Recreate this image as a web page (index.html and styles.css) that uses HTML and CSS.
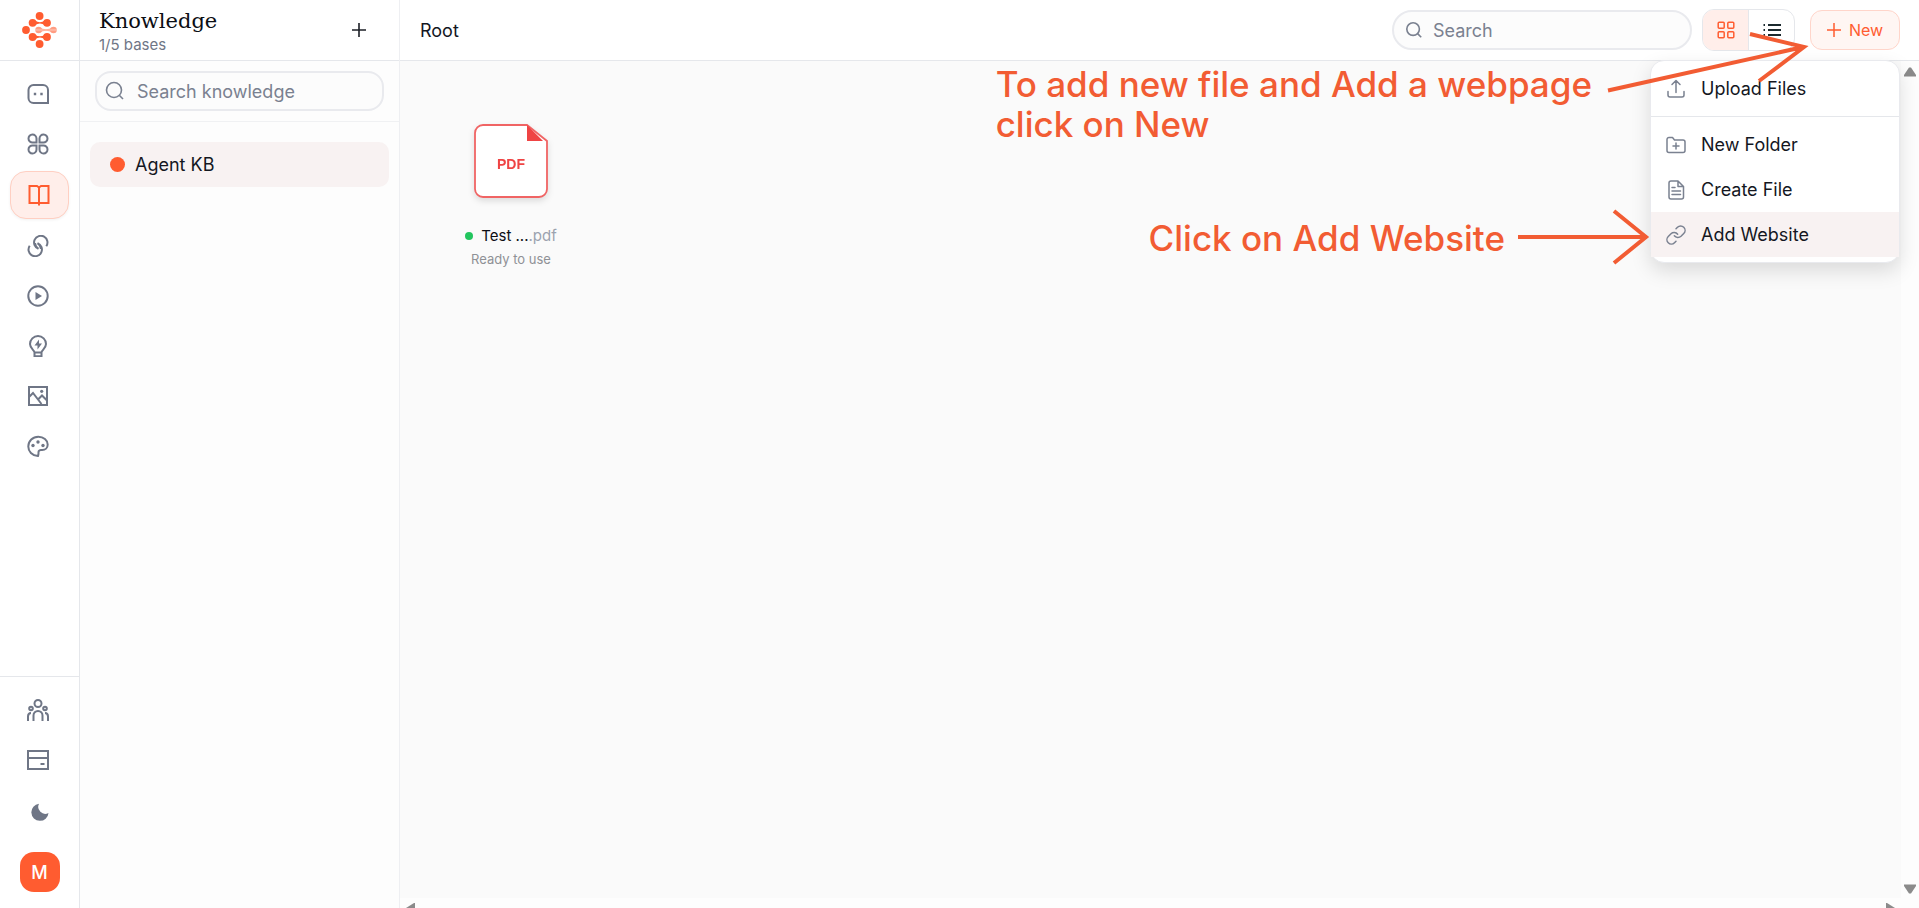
FILE: index.html
```html
<!DOCTYPE html>
<html lang="en">
<head>
    <meta charset="UTF-8">
    <meta name="viewport" content="width=device-width, initial-scale=1.0">
    <title>Knowledge</title>
    <link rel="stylesheet" href="styles.css">
</head>
<body>
    <div class="container">
        <aside class="rail">
            <a href="#" class="logo" aria-label="Home">
                <svg width="36" height="38" viewBox="0 0 36 38">
                    <g fill="#ff5c30">
                        <circle cx="17.6" cy="4" r="3.9"/>
                        <circle cx="10.6" cy="10.8" r="3.9"/>
                        <circle cx="25" cy="10.8" r="3.9"/>
                        <circle cx="4" cy="18" r="3.9"/>
                        <circle cx="10.6" cy="25" r="3.9"/>
                        <circle cx="25" cy="25" r="3.9"/>
                        <circle cx="17.6" cy="32" r="3.9"/>
                        <path d="M13 8.500Q17.800 12 23 8.500V13Q17.800 9.800 13 13ZM13 22.700Q17.800 26 23 22.700V27.200Q17.800 24 13 27.200Z"/>
                    </g>
                    <g fill="#ff9d83">
                        <circle cx="16.600" cy="18" r="3.300"/>
                        <circle cx="31.500" cy="18" r="3.300"/>
                        <path d="M17 15.500Q24 19 31 15.500V20.500Q24 17 17 20.500Z"/>
                    </g>
                    <path d="M13 18h22" stroke="#ffcabc" stroke-width="1"/>
                </svg>
            </a>
            <nav class="rail-nav">
                <a href="#" class="rail-item" aria-label="Chat">
                    <svg class="icon" viewBox="0 0 22 22"><path d="M21 20H6.500a5 5 0 0 1-5-5V7a5 5 0 0 1 5-5H16a5 5 0 0 1 5 5z"/><path d="M8 9.700v2.600M14.500 9.700v2.600" stroke-width="2.400"/></svg>
                </a>
                <a href="#" class="rail-item" aria-label="Apps">
                    <svg class="icon" viewBox="0 0 22 22"><path d="M9.500 9.500H5.700a4 4 0 1 1 3.800-4zM12.500 9.500h3.800a4 4 0 1 0-3.800-4zM9.500 12.500H5.700a4 4 0 1 0 3.800 4zM12.500 12.500h3.800a4 4 0 1 1-3.800 4z"/></svg>
                </a>
                <a href="#" class="rail-item active" aria-label="Knowledge">
                    <svg class="icon" viewBox="0 0 22 22"><path d="M1.500 2H9l2 1.500L13 2h7.500v17h-19zM11 3v18.500"/></svg>
                </a>
                <a href="#" class="rail-item" aria-label="Links">
                    <svg class="icon" viewBox="0 0 22 22"><path d="M11.500 13.800a6.700 6.700 0 1 1 7.800-2.500M10.500 8.200a6.700 6.700 0 1 1-7.800 2.500M8 8c.3 2.500 1.500 4.500 3.500 5.800M14 14c-.3-2.500-1.500-4.500-3.500-5.800"/></svg>
                </a>
                <a href="#" class="rail-item" aria-label="Run">
                    <svg class="icon" viewBox="0 0 22 22"><circle cx="11" cy="11" r="9.700"/><path class="solid" d="M8.500 7v8l6.500-4z"/></svg>
                </a>
                <a href="#" class="rail-item" aria-label="Ideas">
                    <svg class="icon" viewBox="0 0 22 22"><path d="M7.500 17.500v3.700h7v-3.700zM7.500 17.500c0-2-4.500-4-4.500-8.500a8 8 0 0 1 16 0c0 4.500-4.500 6.500-4.500 8.500"/><path class="solid" d="M12 4.500l-4.500 6h3V14.500l4.500-6h-3z"/></svg>
                </a>
                <a href="#" class="rail-item" aria-label="Images">
                    <svg class="icon" viewBox="0 0 22 22"><path d="M2 2h18v18H2zM2 12l4-4 8.500 11M11 14.500l4-4 5 5"/><circle class="solid" cx="14.700" cy="6.300" r="1.600"/></svg>
                </a>
                <a href="#" class="rail-item" aria-label="Themes">
                    <svg class="icon" viewBox="0 0 22 22"><path d="M11 21c-6-.5-9.700-4.500-9.700-9.500 0-5.500 4.500-9.800 10-9.800 5.200 0 9.400 3.500 9.400 7.800 0 3.500-2.500 5.500-5.500 5.500-1.600 0-2.600-.5-3.400 1-.8 1.700.2 3-.8 5z"/><circle class="solid" cx="6" cy="10.500" r="1.700"/><circle class="solid" cx="11" cy="7" r="1.700"/><circle class="solid" cx="16" cy="10.500" r="1.700"/></svg>
                </a>
            </nav>
            <div class="rail-bottom">
                <a href="#" class="rail-item" aria-label="Team">
                    <svg class="icon" viewBox="0 0 22 22"><circle cx="11" cy="4.500" r="3.500"/><circle cx="4" cy="9.500" r="1.800"/><circle cx="18" cy="9.500" r="1.800"/><path d="M6.500 22v-5.500a4.500 4.500 0 0 1 9 0V22M1 22v-4.500c0-2 1-3.500 3-3.500M21 22v-4.500c0-2-1-3.500-3-3.500"/></svg>
                </a>
                <a href="#" class="rail-item" aria-label="Billing">
                    <svg class="icon" viewBox="0 0 22 22"><path d="M1 2h20v18H1zM1 9h20M13.500 15h4"/></svg>
                </a>
                <button type="button" class="theme-btn" aria-label="Dark mode">
                    <svg width="18" height="18" viewBox="0 0 18 18"><path fill="#6f7686" d="M8 .7A8.600 8.600 0 1 0 17.500 10 7 7 0 0 1 8 .7z"/></svg>
                </button>
                <button type="button" class="avatar">M</button>
            </div>
        </aside>

        <aside class="sidebar">
            <header class="sidebar-header">
                <div>
                    <h1>Knowledge</h1>
                    <p>1/5 bases</p>
                </div>
                <button type="button" class="add-btn" aria-label="Add base">
                    <svg width="14" height="14" viewBox="0 0 14 14"><path d="M7 0v14M0 7h14" stroke="#1c1f26" stroke-width="1.600"/></svg>
                </button>
            </header>
            <div class="sidebar-search">
                <div class="search-box">
                    <svg width="20" height="20" viewBox="0 0 20 20" fill="none" stroke="#7a8190" stroke-width="1.600"><circle cx="9" cy="9" r="7.500"/><path d="M14.500 14.500L18 18"/></svg>
                    <input type="text" placeholder="Search knowledge" aria-label="Search knowledge">
                </div>
            </div>
            <ul class="base-list">
                <li><a href="#" class="base"><span class="base-dot"></span>Agent KB</a></li>
            </ul>
        </aside>

        <main>
            <header class="topbar">
                <h2>Root</h2>
                <div class="search-box round">
                    <svg width="18" height="18" viewBox="0 0 20 20" fill="none" stroke="#7a8190" stroke-width="1.800"><circle cx="9" cy="9" r="7"/><path d="M14 14l4 4"/></svg>
                    <input type="text" placeholder="Search" aria-label="Search files">
                </div>
                <div class="view-toggle">
                    <button type="button" class="active" aria-label="Grid view">
                        <svg width="18" height="18" viewBox="0 0 18 18" fill="none" stroke="#ff5c30" stroke-width="1.500"><rect x="1.200" y="1.200" width="6" height="6" rx="1"/><rect x="10.800" y="1.200" width="6" height="6" rx="1"/><rect x="1.200" y="10.800" width="6" height="6" rx="1"/><rect x="10.800" y="10.800" width="6" height="6" rx="1"/></svg>
                    </button>
                    <button type="button" aria-label="List view">
                        <svg width="18" height="18" viewBox="0 0 18 18" stroke="#1c2a2f" stroke-width="2"><path d="M5 4h13M5 9h13M5 14h13M.5 4H2M.5 9H2M.5 14H2"/></svg>
                    </button>
                </div>
                <div class="new-wrap">
                    <button type="button" class="new-btn">
                        <svg width="14" height="14" viewBox="0 0 14 14"><path d="M7 0v14M0 7h14" stroke="#ff5c30" stroke-width="1.500"/></svg>
                        New
                    </button>
                    <div class="menu">
                        <button type="button">
                            <svg class="menu-icon" viewBox="0 0 20 20"><path d="M2 12.500v3.500a2 2 0 0 0 2 2h12a2 2 0 0 0 2-2v-3.500M10 13.500V2M6 5.500L10 1.500l4 4"/></svg>
                            Upload Files
                        </button>
                        <hr>
                        <button type="button">
                            <svg class="menu-icon" viewBox="0 0 20 20"><path d="M1 4.500a2 2 0 0 1 2-2h3.500l2 2.500H17a2 2 0 0 1 2 2v8.500a2 2 0 0 1-2 2H3a2 2 0 0 1-2-2zM10 8v6M7 11h6"/></svg>
                            New Folder
                        </button>
                        <button type="button">
                            <svg class="menu-icon" viewBox="0 0 20 20"><path d="M12 1H5a2 2 0 0 0-2 2v14a2 2 0 0 0 2 2h10.500a2 2 0 0 0 2-2V6.500zM12 1v5.500h5.500M6 7.500h3M6 11h8.500M6 14.500h8.500"/></svg>
                            Create File
                        </button>
                        <button type="button" class="hovered">
                            <svg class="menu-icon" viewBox="0 0 24 24"><path d="M10 13a5.500 5.500 0 0 0 8 .5l3.300-3.300a5.300 5.300 0 0 0-7.500-7.500L12 4.500M14 11a5.500 5.500 0 0 0-8-.5l-3.300 3.300a5.300 5.300 0 0 0 7.500 7.500L12 19.500" stroke-width="1.800"/></svg>
                            Add Website
                        </button>
                    </div>
                </div>
            </header>

            <div class="workspace">
                <div class="files">
                    <a href="#" class="file">
                        <svg class="file-icon" width="90" height="90" viewBox="0 0 90 90">
                            <path class="sheet" d="M17 9h44l20 16v48a8 8 0 0 1-8 8H17a8 8 0 0 1-8-8V17a8 8 0 0 1 8-8z"/>
                            <path d="M61 9v16h16z" fill="#ef4444"/>
                            <text x="45" y="53">PDF</text>
                        </svg>
                        <span class="file-name"><i></i><span>Test ...<em>.pdf</em></span></span>
                        <span class="file-status">Ready to use</span>
                    </a>
                </div>
                <div class="scroll-y">
                    <svg width="14" height="10" viewBox="0 0 14 10"><path d="M6 .5h2L13 8v1.500H1V8z"/></svg>
                    <svg width="14" height="10" viewBox="0 0 14 10"><path d="M6 9.500h2L13 2V.5H1V2z"/></svg>
                </div>
                <div class="scroll-x">
                    <svg width="9" height="12" viewBox="0 0 9 12"><path d="M0 6l8-5h1v10H8z"/></svg>
                    <svg width="9" height="12" viewBox="0 0 9 12"><path d="M9 6L1 1H0v10h1z"/></svg>
                </div>
            </div>

            <!-- walkthrough notes -->
            <p class="note note-new">To add new file and Add a webpage<br>click on New</p>
            <svg class="arrow arrow-new" width="204" height="54" viewBox="0 0 204 54"><path d="M2 60.500L195 17.500M144 4l54 13-45 34"/></svg>
            <p class="note note-website">Click on Add Website</p>
            <svg class="arrow arrow-website" width="134" height="56" viewBox="0 0 134 56"><path d="M2 28h128M98 2l32 26-32 26"/></svg>
        </main>
    </div>
</body>
</html>
```

FILE: styles.css
```css
* {
    margin: 0;
    padding: 0;
    box-sizing: border-box;
}

body {
    font-family: Inter, "Liberation Sans", sans-serif;
    font-size: 18px;
    color: #14171f;
    background-color: #fdfdfd;
    overflow: hidden;
}

button,
input {
    font: inherit;
    color: inherit;
    background: none;
    border: none;
    outline: none;
}

button {
    cursor: pointer;
}

a {
    color: inherit;
    text-decoration: none;
}

.container {
    display: flex;
    height: 100vh;
}

/* icon rail */
.rail {
    width: 80px;
    flex-shrink: 0;
    display: flex;
    flex-direction: column;
    background-color: #fff;
    border-right: 1px solid #e5e7eb;
}

.logo {
    height: 61px;
    padding: 12px 0 0 22px;
    border-bottom: 1px solid #e5e7eb;
}

.rail-nav,
.rail-bottom {
    display: flex;
    flex-direction: column;
    gap: 4px;
    padding: 10px;
}

.rail-item {
    display: flex;
    align-items: center;
    justify-content: center;
    height: 46px;
    padding-right: 4px;
    border-radius: 16px;
}

.rail-item.active {
    height: 48px;
    padding-right: 2px;
    background-color: #ffeeea;
    border: 1px solid #ffcfc2;
    box-shadow: 0 1px 3px rgba(0,0,0,0.06);
}

.icon {
    width: 22px;
    height: 22px;
    fill: none;
    stroke: #6f7686;
    stroke-width: 2;
}

.icon .solid {
    fill: #6f7686;
    stroke: none;
}

.active .icon {
    stroke: #ff5c30;
}

.rail-bottom {
    margin-top: auto;
    padding-bottom: 16px;
    border-top: 1px solid #e5e7eb;
}

.theme-btn {
    display: flex;
    align-items: center;
    justify-content: center;
    height: 50px;
}

.avatar {
    width: 40px;
    height: 40px;
    margin: 11px auto 0;
    border-radius: 14px;
    background-color: #ff5c30;
    color: #fff;
    font-weight: 500;
}

/* knowledge bases */
.sidebar {
    width: 320px;
    flex-shrink: 0;
    border-right: 1px solid #eeeff2;
}

.sidebar-header {
    height: 61px;
    display: flex;
    align-items: center;
    justify-content: space-between;
    padding: 0 24px 0 19px;
    background-color: #fff;
    border-bottom: 1px solid #e5e7eb;
}

.sidebar-header h1 {
    padding-top: 3px;
    font-family: "DejaVu Serif", serif;
    font-size: 21px;
    font-weight: 400;
    line-height: 26px;
    color: #0c0e14;
}

.sidebar-header p {
    font-size: 15px;
    line-height: 22px;
    color: #6f7686;
}

.add-btn {
    width: 32px;
    height: 32px;
}

.sidebar-search {
    padding: 10px 15px;
    border-bottom: 1px solid #f0f1f3;
}

.search-box {
    display: flex;
    align-items: center;
    gap: 12px;
    height: 40px;
    padding: 0 8px;
    border: 2px solid #e9eaee;
    border-radius: 16px;
    background-color: #fcfcfc;
}

.search-box input {
    flex: 1;
    min-width: 0;
}

.search-box input::placeholder {
    color: #7a8190;
    opacity: 1;
}

.base-list {
    list-style: none;
    padding: 20px 10px;
}

.base {
    display: flex;
    align-items: center;
    gap: 10px;
    height: 45px;
    padding: 0 20px;
    border-radius: 10px;
    background-color: #f8f2f2;
}

.base-dot {
    width: 15px;
    height: 15px;
    border-radius: 50%;
    background-color: #ff5c30;
}

/* files */
main {
    position: relative;
    flex: 1;
    min-width: 0;
    display: flex;
    flex-direction: column;
}

.topbar {
    height: 61px;
    flex-shrink: 0;
    display: flex;
    align-items: center;
    padding: 0 19px 0 20px;
    background-color: #fff;
    border-bottom: 1px solid #e5e7eb;
}

.topbar h2 {
    margin-right: auto;
    font-size: 18px;
    font-weight: 400;
}

.search-box.round {
    width: 300px;
    gap: 10px;
    padding: 0 11px;
    border-radius: 20px;
}

.view-toggle {
    display: flex;
    width: 93px;
    height: 42px;
    margin: 0 15px 0 10px;
    border: 1px solid #e5e7eb;
    border-radius: 12px;
    overflow: hidden;
}

.view-toggle button {
    flex: 1;
    display: flex;
    align-items: center;
    justify-content: center;
}

.view-toggle .active {
    background-color: #ffeeea;
    border-right: 1px solid #e5e7eb;
}

.new-wrap {
    position: relative;
}

.new-btn {
    display: flex;
    align-items: center;
    justify-content: center;
    gap: 8px;
    width: 90px;
    height: 40px;
    border: 1px solid #ffd5ca;
    border-radius: 12px;
    background-color: #fff6f3;
    color: #ff5c30;
    font-size: 16px;
}

.menu {
    position: absolute;
    top: 50px;
    right: 0;
    width: 250px;
    padding: 5px 0;
    border: 1px solid #e9eaee;
    border-radius: 14px;
    background-color: #fff;
    box-shadow: 0 8px 20px rgba(0,0,0,0.13);
}

.menu button {
    display: flex;
    align-items: center;
    gap: 15px;
    width: 100%;
    height: 45px;
    padding: 0 15px;
}

.menu .hovered {
    background-color: #f8f2f2;
}

.menu hr {
    margin: 5px 0;
    border: none;
    border-top: 1px solid #e5e7eb;
}

.menu-icon {
    width: 20px;
    height: 20px;
    fill: none;
    stroke: #7a8190;
    stroke-width: 1.5;
    stroke-linecap: round;
    stroke-linejoin: round;
}

.workspace {
    flex: 1;
    min-height: 0;
    display: grid;
    grid-template-columns: 1fr 18px;
    grid-template-rows: 1fr 10px;
}

.files {
    padding: 55px 40px;
    background-color: #fafafa;
}

.file {
    display: flex;
    flex-direction: column;
    align-items: center;
    width: 142px;
}

.file-icon {
    margin-bottom: 19px;
    filter: drop-shadow(0 3px 3px rgba(0,0,0,0.12));
}

.file-icon .sheet {
    fill: #fff;
    stroke: #f06464;
    stroke-width: 1.8;
}

.file-icon text {
    font-family: "Liberation Sans", Arial, sans-serif;
    font-size: 14px;
    font-weight: 700;
    fill: #ef4444;
    text-anchor: middle;
}

.file-name {
    display: flex;
    align-items: center;
    gap: 8px;
    font-size: 15px;
    line-height: 22px;
    color: #0c0e14;
}

.file-name i {
    width: 8px;
    height: 8px;
    border-radius: 50%;
    background-color: #22c55e;
}

.file-name em {
    font-style: normal;
    color: #9ca3af;
}

.file-status {
    margin-top: 2px;
    font-size: 13px;
    line-height: 20px;
    color: #8f9196;
}

.scroll-y,
.scroll-x {
    display: flex;
    justify-content: space-between;
    fill: #8b8b8b;
    overflow: hidden;
}

.scroll-y {
    flex-direction: column;
    align-items: center;
    padding: 6px 0 4px;
}

.scroll-x {
    padding: 4px 6px 0;
}

/* notes over the page */
.note {
    position: absolute;
    color: #f25c33;
    font-size: 35px;
    font-weight: 500;
    line-height: 40px;
    white-space: nowrap;
}

.note-new {
    top: 64px;
    right: 327px;
}

.note-website {
    top: 218px;
    right: 414px;
}

.arrow {
    position: absolute;
    fill: none;
    stroke: #f25c33;
    stroke-width: 4;
    overflow: visible;
}

.arrow-new {
    top: 30px;
    right: 109px;
}

.arrow-website {
    top: 209px;
    right: 269px;
}
```
